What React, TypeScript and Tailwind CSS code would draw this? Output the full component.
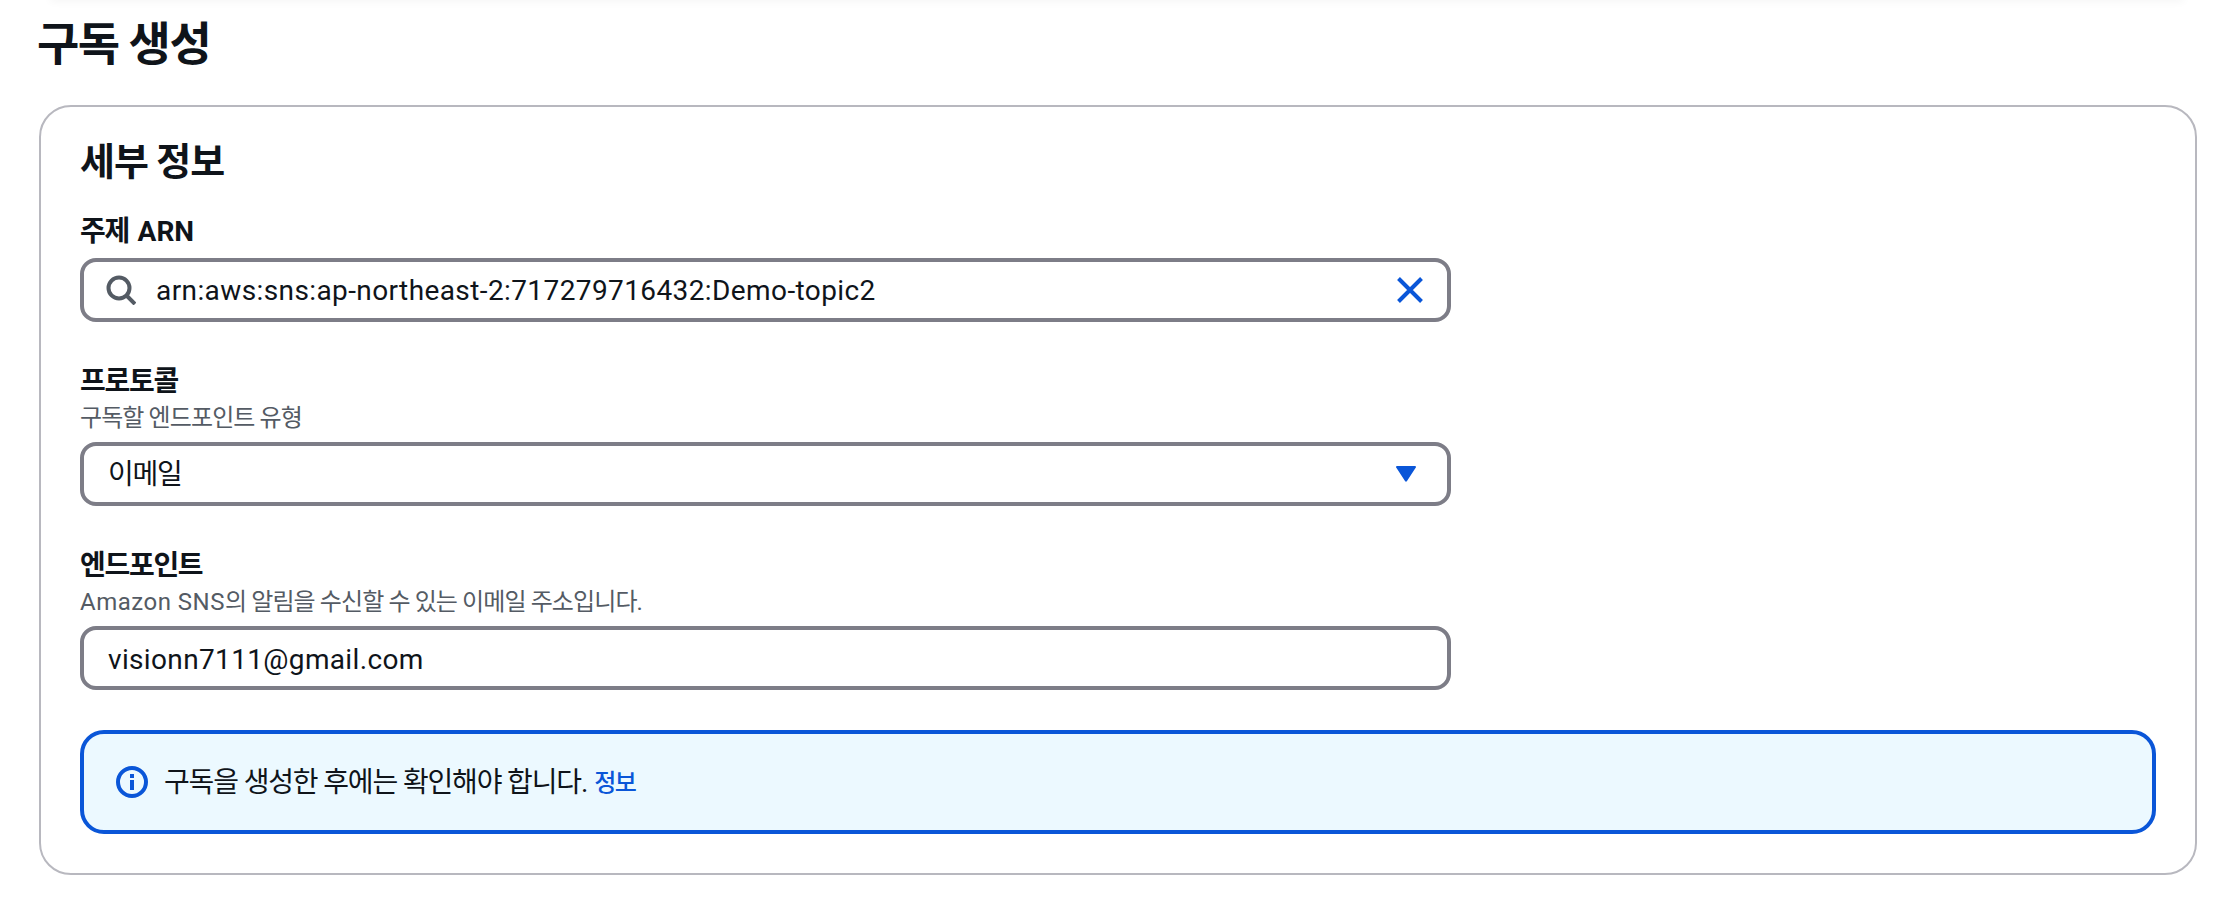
import { ReactNode } from 'react';

const font = "font-['Roboto','Noto_Sans_CJK_KR',sans-serif]";

function SearchIcon() {
  return (
    <svg width="30" height="30" viewBox="0 0 30 30" fill="none" stroke="#545b64" strokeWidth="4" className="-ml-[2px] shrink-0">
      <circle cx="13" cy="13" r="10.5" />
      <path d="M20.5 20.5l8.5 8.5" />
    </svg>
  );
}

function ClearIcon() {
  return (
    <svg width="26" height="26" viewBox="0 0 26 26" fill="none" stroke="#0a56d8" strokeWidth="4" className="shrink-0">
      <path d="M1.5 1.5l23 23M24.5 1.5l-23 23" />
    </svg>
  );
}

function CaretIcon() {
  return (
    <svg width="20" height="16" viewBox="0 0 20 16" fill="#0a56d8" className="shrink-0">
      <path d="M1 0h18a1 1 0 0 1 .8 1.6L11 15a1.2 1.2 0 0 1-2 0L.2 1.6A1 1 0 0 1 1 0z" />
    </svg>
  );
}

function InfoIcon() {
  return (
    <svg width="32" height="32" viewBox="0 0 32 32" fill="none" className="shrink-0">
      <circle cx="16" cy="16" r="14" stroke="#0a56d8" strokeWidth="4" />
      <path d="M16 14v10" stroke="#0a56d8" strokeWidth="4" />
      <path d="M16 8v4" stroke="#0a56d8" strokeWidth="4" />
    </svg>
  );
}

function Box({ children }: { children: ReactNode }) {
  return (
    <div className="flex h-16 w-[1371px] items-center rounded-2xl border-4 border-[#7d7d87] bg-white pr-[24px] pl-[24px] text-[28px] text-[#0f141a]">
      {children}
    </div>
  );
}

function Field({ label, desc, children }: { label: ReactNode; desc?: ReactNode; children: ReactNode }) {
  return (
    <div>
      <div className="h-9 text-[28px] leading-[40px] font-bold tracking-[-1.3px] text-[#0f141a]">{label}</div>
      {desc && <div className="mt-[2px] h-8 text-2xl leading-[36px] tracking-[-0.9px] text-[#545b64]">{desc}</div>}
      <div className="mt-[10px]">{children}</div>
    </div>
  );
}

export default function App() {
  return (
    <div className={`${font} h-[904px] w-[2234px] overflow-hidden bg-white`}>
      <div className="mx-[50px] -mt-[10px] h-[10px] shadow-[0_2px_8px_rgba(0,0,0,0.04)]" />
      <h1 className="ml-[37px] h-[84px] text-[46px] leading-[88px] font-bold tracking-[-1.5px] text-[#0f141a]">구독 생성</h1>
      <div className="mt-[21px] ml-[39px] h-[770px] w-[2158px] rounded-[32px] border-2 border-[#b8b8bf] bg-white pt-[33px] pl-[39px]">
        <h2 className="text-[38px] leading-[44px] font-bold tracking-[-1px] text-[#0f141a]">세부 정보</h2>
        <div className="mt-7 flex flex-col gap-10">
          <Field label={<>주제 <span className="ml-[3px] tracking-normal">ARN</span></>}>
            <Box>
              <SearchIcon />
              <span className="ml-[20px] flex-1 pt-[2px] tracking-[0.4px]">arn:aws:sns:ap-northeast-2:717279716432:Demo-topic2</span>
              <ClearIcon />
            </Box>
          </Field>
          <Field label="프로토콜" desc="구독할 엔드포인트 유형">
            <Box>
              <span className="flex-1 pt-[2px] tracking-[-1.2px]">이메일</span>
              <span className="mr-[7px] flex"><CaretIcon /></span>
            </Box>
          </Field>
          <Field
            label="엔드포인트"
            desc={<><span className="tracking-[0.5px]">Amazon SNS</span>의 알림을 수신할 수 있는 이메일 주소입니다.</>}
          >
            <Box>
              <span className="pt-[3px] tracking-[0.35px]">visionn7111@gmail.com</span>
            </Box>
          </Field>
        </div>
        <div className="mt-10 flex h-[104px] w-[2076px] items-center rounded-3xl border-4 border-[#0a56d8] bg-[#ecf9ff] pl-[32px] text-[28px] text-[#0f141a]">
          <InfoIcon />
          <span className="ml-[16px] pt-[2px] tracking-[-1.15px]">구독을 생성한 후에는 확인해야 합니다.</span>
          <a className="ml-[7px] pt-[2px] text-2xl font-medium tracking-[-1.5px] text-[#0a56d8]">정보</a>
        </div>
      </div>
    </div>
  );
}
